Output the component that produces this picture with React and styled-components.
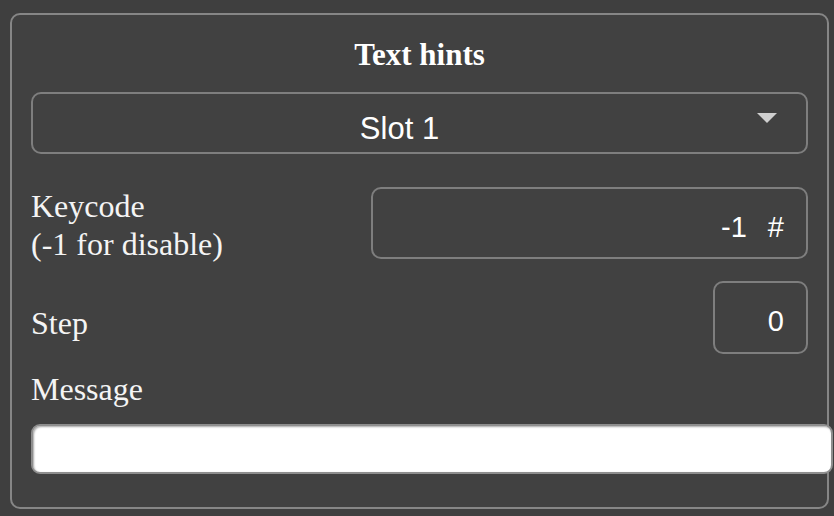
import React from 'react';
import styled, { createGlobalStyle } from 'styled-components';

const GlobalStyle = createGlobalStyle`
  html, body {
    margin: 0;
    padding: 0;
    background: #3f3f3f;
    overflow: hidden;
  }
  * {
    box-sizing: border-box;
  }
`;

const Page = styled.div`
  width: 834px;
  height: 516px;
  padding: 13px 5px 0 10px;
`;

const Panel = styled.section`
  background: #414141;
  border: 2px solid #868686;
  border-radius: 10px;
  padding: 22px 19px 33px;
  display: flex;
  flex-direction: column;
`;

const Title = styled.h2`
  margin: 0 0 19px;
  font-family: 'Liberation Serif', 'Times New Roman', serif;
  font-weight: 700;
  font-size: 31px;
  line-height: 36px;
  color: #ffffff;
  text-align: center;
`;

const Select = styled.div`
  position: relative;
  height: 62px;
  border: 2px solid #7e7e7e;
  border-radius: 10px;
  padding: 17px 40px 0 0;
  font-family: 'Liberation Sans', Arial, sans-serif;
  font-size: 31px;
  line-height: 36px;
  color: #ffffff;
  text-align: center;
`;

const Caret = styled.span`
  position: absolute;
  right: 29px;
  top: 19px;
  width: 0;
  height: 0;
  border-left: 10px solid transparent;
  border-right: 10px solid transparent;
  border-top: 10px solid #cfcfcf;
`;

const Row = styled.div`
  display: flex;
  justify-content: space-between;
  align-items: flex-start;
  margin-top: ${p => p.gap || 0}px;
`;

const Label = styled.div`
  font-family: 'Liberation Serif', 'Times New Roman', serif;
  font-size: 32px;
  line-height: 38px;
  color: #f4f4f4;
  padding-top: ${p => p.offset || 0}px;
`;

const NumberBox = styled.div`
  width: ${p => p.width}px;
  height: ${p => p.height}px;
  border: 2px solid #7e7e7e;
  border-radius: 10px;
  padding: 8px 22px 0 0;
  display: flex;
  align-items: center;
  justify-content: flex-end;
  gap: 21px;
  font-family: 'Liberation Sans', Arial, sans-serif;
  font-size: 29px;
  color: #ffffff;
`;

const Unit = styled.span`
  font-size: 29px;
`;

const TextInput = styled.input`
  display: block;
  width: calc(100% + 25px);
  height: 50px;
  margin-top: 16px;
  border: 2px solid #8e8e8e;
  border-radius: 9px;
  background: #ffffff;
  box-shadow: inset 1px 1px 2px rgba(0, 0, 0, 0.35);
  outline: none;
  padding: 0 12px;
  font-family: 'Liberation Sans', Arial, sans-serif;
  font-size: 24px;
`;

const App = () => {
  return (
    <Page>
      <GlobalStyle />
      <Panel>
        <Title>Text hints</Title>

        <Select>
          Slot 1
          <Caret />
        </Select>

        <Row gap={33}>
          <Label>
            Keycode
            <br />
            (-1 for disable)
          </Label>
          <NumberBox width={437} height={72}>
            <span>-1</span>
            <Unit>#</Unit>
          </NumberBox>
        </Row>

        <Row gap={18}>
          <Label offset={23}>Step</Label>
          <NumberBox width={95} height={73}>
            <span>0</span>
          </NumberBox>
        </Row>

        <Label offset={16}>Message</Label>
        <TextInput type="text" defaultValue="" />
      </Panel>
    </Page>
  );
};

export default App;
